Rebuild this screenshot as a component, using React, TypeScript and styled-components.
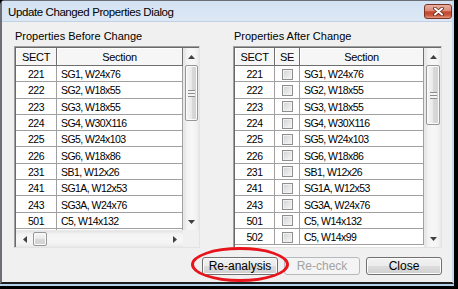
import React from 'react';
import styled, { createGlobalStyle } from 'styled-components';

const GlobalStyle = createGlobalStyle`
    *, *::before, *::after {
        box-sizing: border-box;
    }
    html, body {
        margin: 0;
        padding: 0;
        background: #000;
    }
    body {
        font-family: "Liberation Sans", Arial, sans-serif;
    }
`;

const Screen = styled.div`
    position: relative;
    width: 458px;
    height: 289px;
    background: #000;
    overflow: hidden;
`;

const Window = styled.div`
    width: 454px;
    height: 284px;
    display: flex;
    flex-direction: column;
    background: #dae6f3;
    border-left: 2px solid #6b6f75;
    border-top: 1px solid #6b6f75;
    border-right: 2px solid #c4d9ee;
    border-bottom: 2px solid #1e1e1e;
    border-top-left-radius: 5px;
`;

const BottomLine = styled.div`
    width: 454px;
    height: 2px;
    background: #b4d1ec;
`;

const TitleBar = styled.div`
    height: 21px;
    display: flex;
    align-items: center;
    justify-content: space-between;
    padding: 0 0 0 6px;
    background: linear-gradient(#d3e2f3, #dde8f5);
    border-bottom: 1px solid #c1d0e2;
`;

const Title = styled.span`
    font-size: 11.5px;
    letter-spacing: -0.4px;
    color: #000;
    margin-top: 2px;
`;

const CloseButton = styled.div`
    width: 28px;
    height: 15px;
    margin-top: 1px;
    display: flex;
    align-items: center;
    justify-content: center;
    border: 1px solid #7a3326;
    border-radius: 3px;
    background: linear-gradient(#eab0a2 0%, #db8a78 45%, #c5472d 52%, #c9543a 78%, #e39a82 100%);
`;

const Client = styled.div`
    flex: 1;
    display: flex;
    flex-direction: column;
    background: #f0f0f0;
    padding: 8px 10px 0 12px;
`;

const Panels = styled.div`
    display: flex;
    justify-content: space-between;
`;

const Panel = styled.div<{ $width: number }>`
    width: ${(p) => p.$width}px;
    display: flex;
    flex-direction: column;
`;

const Label = styled.div`
    font-size: 11px;
    line-height: 13px;
    color: #000;
    margin: 0 0 3px 1px;
`;

const ListFrame = styled.div<{ $hscroll?: boolean }>`
    height: 202px;
    display: grid;
    grid-template-columns: 1fr auto;
    grid-template-rows: ${(p) => (p.$hscroll ? '1fr 17px' : '1fr')};
    border: 1px solid;
    border-color: #a0a0a0 #e3e3e3 #e3e3e3 #a0a0a0;
    padding: 1px 0 0 1px;
    box-shadow: inset 1px 1px 0 #696969;
    background: #fff;
    overflow: hidden;
`;

const GridArea = styled.div`
    overflow: hidden;
    background: #fff;
`;

const Row = styled.div<{ $cols: string }>`
    display: grid;
    grid-template-columns: ${(p) => p.$cols};
`;

const HeadCell = styled.div`
    height: 18px;
    display: flex;
    align-items: center;
    justify-content: center;
    font-size: 11px;
    letter-spacing: -0.3px;
    color: #000;
    background: #f6f6f6;
    border-right: 1px solid #6f6f6f;
    border-bottom: 1px solid #6f6f6f;
    box-shadow: inset 1px 1px 0 #fff;
`;

const Cell = styled.div<{ $align?: 'center' | 'left' }>`
    height: 16.3px;
    display: flex;
    align-items: center;
    justify-content: ${(p) => (p.$align === 'left' ? 'flex-start' : 'center')};
    padding: 1px 0 0 ${(p) => (p.$align === 'left' ? '4px' : '0')};
    font-size: 10.5px;
    letter-spacing: -0.55px;
    color: #000;
    white-space: nowrap;
    border-right: 1px solid #a0a0a0;
    border-bottom: 1px solid #a0a0a0;
`;

const CheckBox = styled.div`
    width: 11px;
    height: 11px;
    border: 1px solid #8e8f8f;
    background: linear-gradient(135deg, #cfd2d6 0%, #e4e5e7 50%, #f7f7f7 100%);
    box-shadow: inset 0 0 0 1px #f2f2f2;
`;

const VScroll = styled.div<{ $width: number }>`
    width: ${(p) => p.$width}px;
    display: flex;
    flex-direction: column;
    background: linear-gradient(90deg, #e4e4e4 0, #f3f3f3 20%, #f7f7f7 50%, #f3f3f3 80%, #e8e8e8 100%);
    border-left: 1px solid #e8e8e8;
`;

const HScroll = styled.div`
    display: flex;
    background: linear-gradient(#e4e4e4 0, #f3f3f3 20%, #f7f7f7 50%, #f3f3f3 80%, #e8e8e8 100%);
    border-top: 1px solid #e8e8e8;
`;

const ArrowBox = styled.div`
    flex: 0 0 17px;
    display: flex;
    align-items: center;
    justify-content: center;
`;

const Track = styled.div`
    flex: 1;
    display: flex;
    flex-direction: column;
`;

const HTrack = styled.div`
    flex: 1;
    display: flex;
`;

const Thumb = styled.div<{ $length: number; $horizontal?: boolean }>`
    ${(p) => (p.$horizontal ? `width: ${p.$length}px; margin: 1px 0;` : `height: ${p.$length}px; margin: 0 1px;`)}
    display: flex;
    align-items: center;
    justify-content: center;
    border: 1px solid #979797;
    border-radius: 2px;
    background: ${(p) =>
        p.$horizontal
            ? 'linear-gradient(#f6f6f6 0%, #e9e9e9 50%, #d9d9d9 51%, #d2d2d2 100%)'
            : 'linear-gradient(90deg, #f6f6f6 0%, #e9e9e9 50%, #d9d9d9 51%, #d2d2d2 100%)'};
    box-shadow: inset 0 0 0 1px #fbfbfb;
`;

const Grip = styled.div`
    width: 7px;
    height: 7px;
    background: repeating-linear-gradient(#8c8c8c 0, #8c8c8c 1px, #f4f4f4 1px, #f4f4f4 3px);
`;

const Corner = styled.div`
    background: #f0f0f0;
`;

const ButtonRow = styled.div`
    display: flex;
    justify-content: flex-end;
    gap: 6px;
    margin-top: 9px;
    padding-right: 0;
`;

const Button = styled.div<{ $disabled?: boolean }>`
    width: 76px;
    height: 18px;
    display: flex;
    align-items: center;
    justify-content: center;
    font-size: 12px;
    color: ${(p) => (p.$disabled ? '#a3a3a3' : '#000')};
    border: 1px solid ${(p) => (p.$disabled ? '#b5b9bc' : '#707070')};
    border-radius: 3px;
    background: ${(p) =>
        p.$disabled
            ? '#f4f4f4'
            : 'linear-gradient(#f2f2f2 0%, #ebebeb 50%, #dddddd 51%, #cfcfcf 100%)'};
    box-shadow: inset 0 0 0 1px ${(p) => (p.$disabled ? '#f4f4f4' : '#fcfcfc')};
`;

const Mark = styled.div`
    position: absolute;
    left: 191px;
    top: 247px;
    width: 98px;
    height: 35px;
    border: 3px solid #e8141b;
    border-radius: 50%;
    pointer-events: none;
`;

const Arrow = ({ dir }: { dir: 'up' | 'down' | 'left' | 'right' }) => {
    const pts = {
        up: '0,4 3.5,0 7,4',
        down: '0,0 7,0 3.5,4',
        left: '4,0 4,7 0,3.5',
        right: '0,0 0,7 4,3.5',
    }[dir];
    const vertical = dir === 'up' || dir === 'down';
    return (
        <svg width={vertical ? 7 : 4} height={vertical ? 4 : 7} viewBox={vertical ? '0 0 7 4' : '0 0 4 7'}>
            <polygon points={pts} fill="#404040" />
        </svg>
    );
};

const rows = [
    ['221', 'SG1, W24x76'],
    ['222', 'SG2, W18x55'],
    ['223', 'SG3, W18x55'],
    ['224', 'SG4, W30X116'],
    ['225', 'SG5, W24x103'],
    ['226', 'SG6, W18x86'],
    ['231', 'SB1, W12x26'],
    ['241', 'SG1A, W12x53'],
    ['243', 'SG3A, W24x76'],
    ['501', 'C5, W14x132'],
    ['502', 'C5, W14x99'],
];

// the left grid shows ten rows; the next one is hidden under the scroll bar
const leftRows = rows.slice(0, 10);

const leftCols = '41px 126px';
const rightCols = '40px 25px 124px';

//------------------Component------------------
const VerticalBar = ({ width, thumb }: { width: number; thumb: number }) => (
    <VScroll $width={width}>
        <ArrowBox>
            <Arrow dir="up" />
        </ArrowBox>
        <Track>
            <Thumb $length={thumb}>
                <Grip />
            </Thumb>
        </Track>
        <ArrowBox>
            <Arrow dir="down" />
        </ArrowBox>
    </VScroll>
);

const App = () => {
    return (
        <Screen>
            <GlobalStyle />
            <Window>
                <TitleBar>
                    <Title>Update Changed Properties Dialog</Title>
                    <CloseButton>
                        <svg width="11" height="9" viewBox="0 0 11 9">
                            <path d="M2 1.5 L9 7.5 M9 1.5 L2 7.5" stroke="#5e2418" strokeWidth="3.6" strokeLinecap="round" />
                            <path d="M2 1.5 L9 7.5 M9 1.5 L2 7.5" stroke="#fff" strokeWidth="2" strokeLinecap="round" />
                        </svg>
                    </CloseButton>
                </TitleBar>
                <Client>
                    <Panels>
                        <Panel $width={186}>
                            <Label>Properties Before Change</Label>
                            <ListFrame $hscroll>
                                <GridArea>
                                    <Row $cols={leftCols}>
                                        <HeadCell>SECT</HeadCell>
                                        <HeadCell>Section</HeadCell>
                                    </Row>
                                    {leftRows.map(([sect, section]) => (
                                        <Row $cols={leftCols} key={sect}>
                                            <Cell>{sect}</Cell>
                                            <Cell $align="left">{section}</Cell>
                                        </Row>
                                    ))}
                                    <Row $cols={leftCols}>
                                        <Cell />
                                        <Cell />
                                    </Row>
                                </GridArea>
                                <VerticalBar width={16} thumb={56} />
                                <HScroll>
                                    <ArrowBox>
                                        <Arrow dir="left" />
                                    </ArrowBox>
                                    <HTrack>
                                        <Thumb $length={14} $horizontal />
                                    </HTrack>
                                    <ArrowBox>
                                        <Arrow dir="right" />
                                    </ArrowBox>
                                </HScroll>
                                <Corner />
                            </ListFrame>
                        </Panel>
                        <Panel $width={209}>
                            <Label>Properties After Change</Label>
                            <ListFrame>
                                <GridArea>
                                    <Row $cols={rightCols}>
                                        <HeadCell>SECT</HeadCell>
                                        <HeadCell>SE</HeadCell>
                                        <HeadCell>Section</HeadCell>
                                    </Row>
                                    {rows.map(([sect, section]) => (
                                        <Row $cols={rightCols} key={sect}>
                                            <Cell>{sect}</Cell>
                                            <Cell>
                                                <CheckBox />
                                            </Cell>
                                            <Cell $align="left">{section}</Cell>
                                        </Row>
                                    ))}
                                </GridArea>
                                <VerticalBar width={17} thumb={60} />
                            </ListFrame>
                        </Panel>
                    </Panels>
                    <ButtonRow>
                        <Button>Re-analysis</Button>
                        <Button $disabled>Re-check</Button>
                        <Button>Close</Button>
                    </ButtonRow>
                </Client>
            </Window>
            <BottomLine />
            <Mark />
        </Screen>
    );
};

export default App;
